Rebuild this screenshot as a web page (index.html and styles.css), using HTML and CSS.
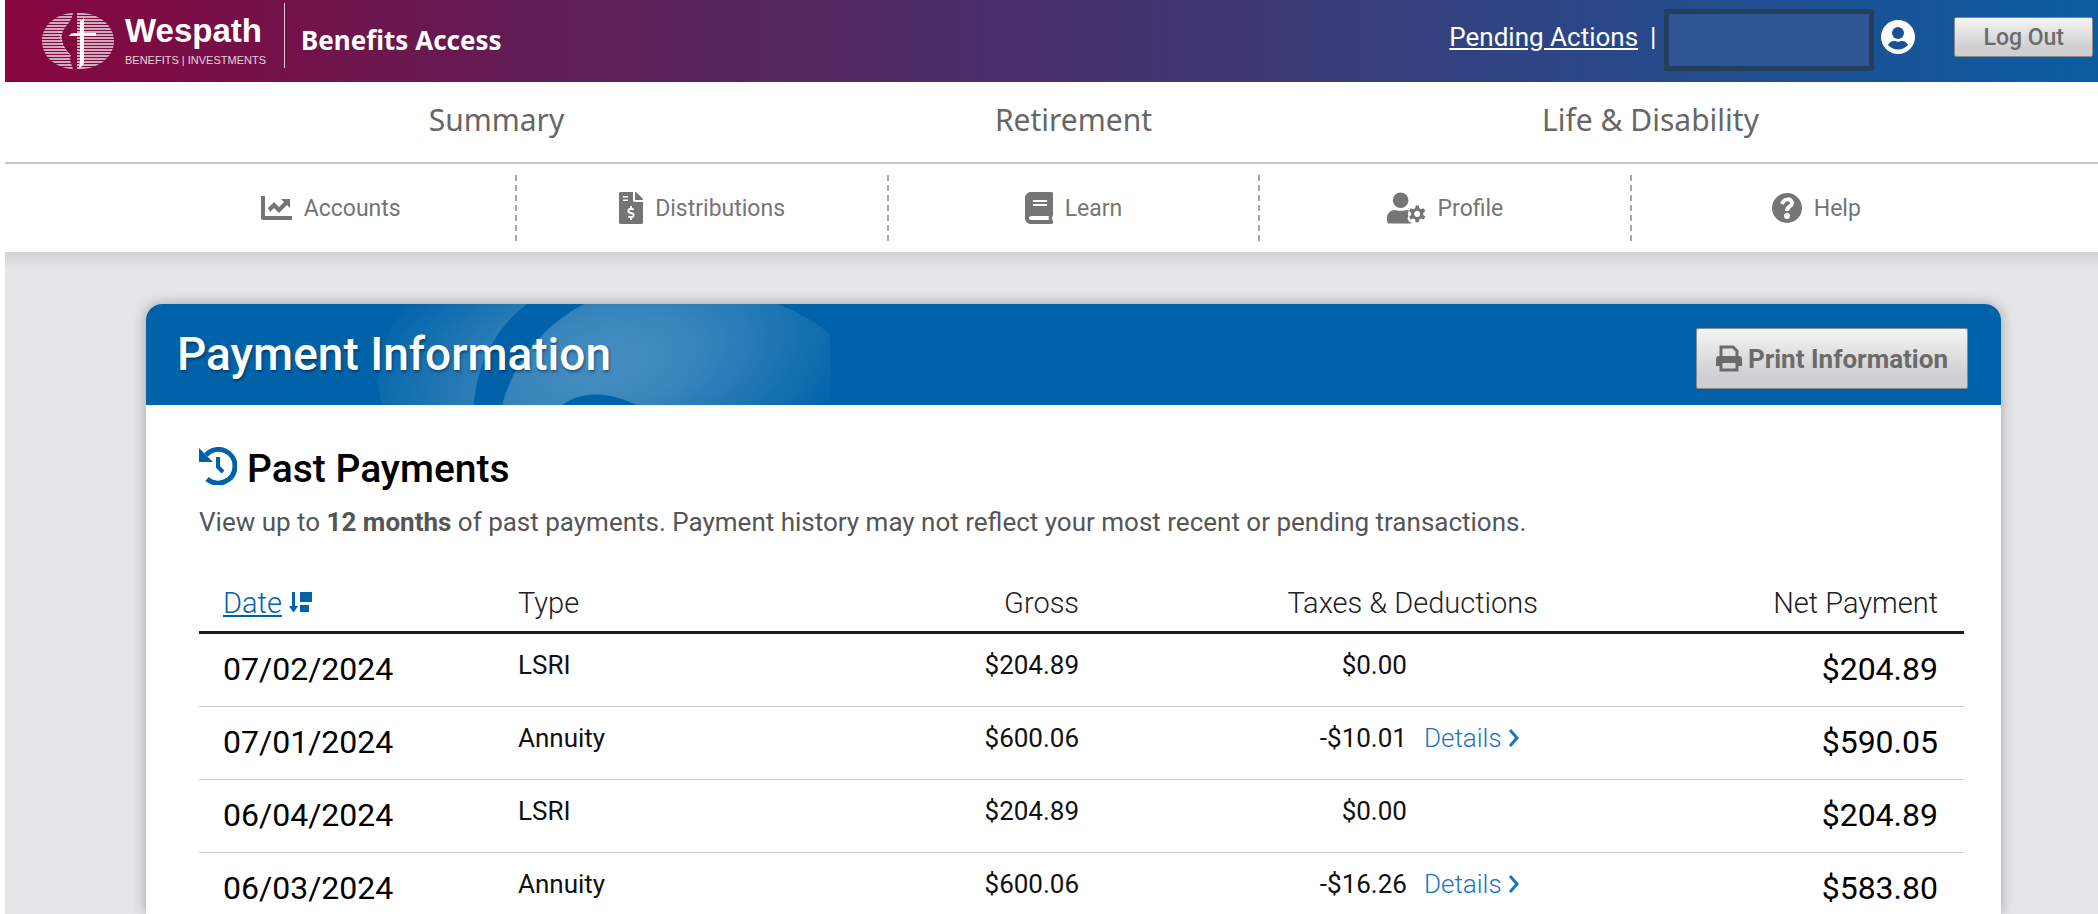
FILE: index.html
```html
<!DOCTYPE html>
<html lang="en">
<head>
  <meta charset="UTF-8">
  <title>Wespath Benefits Access - Payment Information</title>
  <link rel="stylesheet" href="styles.css">
</head>
<body>

  <header class="topbar">
    <a class="logo" href="#">
      <svg class="globe" width="72" height="56" viewBox="0 0 72 56" aria-hidden="true">
        <defs>
          <clipPath id="globe-clip">
            <path d="M31 0C14 1 0 12 0 28s14 27 31 28c-2-6-4-10-2-14-8-7-11-16-8-24 3-6 8-8 10-18z"/>
            <path d="M35 0c20-1 37 11 37 28S55 57 35 56z"/>
          </clipPath>
        </defs>
        <g clip-path="url(#globe-clip)" stroke="#fff" stroke-opacity=".65" stroke-width="2">
          <path d="M0 1h72M0 4h72M0 7h72M0 10h72M0 13h72M0 16h72M0 19h72M0 22h72M0 25h72M0 28h72M0 31h72M0 34h72M0 37h72M0 40h72M0 43h72M0 46h72M0 49h72M0 52h72M0 55h72"/>
        </g>
        <path d="M18 18c0 10 3 18 11 25" fill="none" stroke="#fff" stroke-opacity=".7" stroke-dasharray="2 2"/>
        <path d="M38 8l4-3v15h12v3H42v26c0 3-2 5-5 6l1-8V23H27c1-2 3-3 6-3h5z" fill="#fff"/>
      </svg>
      <span class="logo-text">
        <span class="logo-name">Wespath</span>
        <span class="logo-tag">BENEFITS | INVESTMENTS</span>
      </span>
    </a>
    <span class="app-name">Benefits Access</span>

    <div class="user-tools">
      <a class="pending" href="#">Pending Actions</a>
      <span class="pipe">|</span>
      <span class="user-name"></span>
      <svg class="user-icon" width="34" height="34" viewBox="0 0 34 34" aria-hidden="true">
        <circle cx="17" cy="17" r="17" fill="#fff"/>
        <circle cx="17" cy="13" r="6" fill="#1a5196"/>
        <path d="M7 25c2-4 5-4 7-4 2 1 4 1 6 0 2 0 5 0 7 4-6 6-14 6-20 0z" fill="#1a5196"/>
      </svg>
      <button class="btn btn-logout" type="button">Log Out</button>
    </div>
  </header>

  <nav class="main-nav">
    <a href="#">Summary</a>
    <a href="#">Retirement</a>
    <a href="#">Life &amp; Disability</a>
  </nav>

  <nav class="sub-nav">
    <a href="#">
      <svg width="31" height="24" viewBox="0 0 31 24" aria-hidden="true"><path d="M0 0h4v20h27v4H2q-2 0-2-2z"/><path d="M7 12l6-6 5 5 5-5-3-3h9v9l-3-3-8 8-5-5-4 4z"/></svg>
      Accounts
    </a>
    <a href="#">
      <svg width="24" height="32" viewBox="0 0 384 512" aria-hidden="true"><path d="M377 105 279 7c-4-5-11-7-17-7h-6v128h128v-6c0-6-3-12-7-17zM224 136V0H24C11 0 0 11 0 24v464c0 13 11 24 24 24h336c13 0 24-11 24-24V160H248c-13 0-24-11-24-24zM64 64h80v24H64zm0 56h80v24H64zm144 296v24c0 5-3 8-8 8h-16c-5 0-8-3-8-8v-24c-11 0-22-4-31-11-4-3-4-8-1-12l12-11c3-3 7-3 10-1 4 3 9 4 14 4h28c6 0 11-6 11-13 0-6-3-11-8-12l-45-14c-19-6-32-24-32-44 0-25 19-45 42-46v-24c0-5 3-8 8-8h16c5 0 8 3 8 8v24c11 1 22 5 31 11 4 3 4 8 1 12l-12 11c-3 3-7 3-10 1-4-2-9-4-14-4h-28c-6 0-11 6-11 13 0 6 3 11 8 12l45 14c19 6 32 24 32 44 0 25-19 46-42 46z" fill-rule="evenodd"/></svg>
      Distributions
    </a>
    <a href="#">
      <svg width="28" height="32" viewBox="0 0 448 512" aria-hidden="true"><path d="M448 360V24c0-13-11-24-24-24H96C43 0 0 43 0 96v320c0 53 43 96 96 96h328c13 0 24-11 24-24v-16c0-7-4-14-9-19-4-15-4-59 0-74 6-4 9-11 9-19zM128 134c0-3 3-6 6-6h212c3 0 6 3 6 6v20c0 3-3 6-6 6H134c-3 0-6-3-6-6zm0 64c0-3 3-6 6-6h212c3 0 6 3 6 6v20c0 3-3 6-6 6H134c-3 0-6-3-6-6zm253 250H96c-18 0-32-14-32-32s14-32 32-32h285c-2 17-2 47 0 64z" fill-rule="evenodd"/></svg>
      Learn
    </a>
    <a href="#">
      <svg width="39" height="32" viewBox="0 0 640 512" aria-hidden="true"><circle cx="224" cy="128" r="128"/><path d="M0 422c0-80 60-134 134-134 55 20 125 20 180 0 20 0 36 3 50 9-12 22-24 34-20 56 8 20 4 50-8 72 5 35 35 65 66 78v9H48c-27 0-48-21-48-48z"/><path d="M470 216h52l9 44 30 17 42-15 26 44-34 30v34l34 30-26 44-42-15-30 17-9 44h-52l-9-44-30-17-42 15-26-44 34-30v-34l-34-30 26-44 42 15 30-17zm26 87a50 50 0 1 0 .1 0z" fill-rule="evenodd"/></svg>
      Profile
    </a>
    <a href="#">
      <svg width="30" height="30" viewBox="0 0 30 30" aria-hidden="true"><circle cx="15" cy="15" r="15"/><path d="M10 11c2-6 10-6 10-1 0 4-5 3-5 8" fill="none" stroke="#fff" stroke-width="4"/><circle cx="15" cy="23" r="3" fill="#fff"/></svg>
      Help
    </a>
  </nav>

  <main class="page">
    <section class="card">
      <div class="card-header">
        <svg class="card-art" width="454" height="101" viewBox="0 0 454 101" aria-hidden="true">
          <defs>
            <radialGradient id="art-glow" gradientUnits="userSpaceOnUse" cx="0" cy="0" r="1" gradientTransform="translate(230 60) rotate(-15) scale(275 150)">
              <stop offset="0" stop-color="#fff" stop-opacity=".27"/>
              <stop offset=".3" stop-color="#fff" stop-opacity=".23"/>
              <stop offset="1" stop-color="#fff" stop-opacity="0"/>
            </radialGradient>
          </defs>
          <path d="M32 0h119C121 22 100 60 98 101H6C-3 66 5 30 32 0z" fill="url(#art-glow)"/>
          <path d="M208 0h194q30 12 52 30v71H261C233 88 207 86 186 101h-60C138 60 162 25 208 0z" fill="url(#art-glow)"/>
        </svg>
        <h1>Payment Information</h1>
        <button class="btn btn-print" type="button">
          <svg width="26" height="27" viewBox="0 0 26 27" aria-hidden="true"><path d="M5 12V2h12l4 4v6M5 18v7h16v-7" fill="none" stroke="#6b6b6b" stroke-width="3"/><path d="M3 11h20q3 0 3 3v7h-4v-3H4v3H0v-7q0-3 3-3z" fill="#6b6b6b"/></svg>
          Print Information
        </button>
      </div>

      <div class="card-body">
        <h2>
          <svg width="38" height="38" viewBox="0 0 38 38" aria-hidden="true"><path d="M7 8C19-4 36 5 36 19c0 15-17 22-28 13" fill="none" stroke="#0063a9" stroke-width="5"/><path d="M0 1l14 14H0z" fill="#0063a9"/><path d="M19 10v10l5 5" fill="none" stroke="#0063a9" stroke-width="4"/></svg>
          Past Payments
        </h2>
        <p class="intro">View up to <strong>12 months</strong> of past payments. Payment history may not reflect your most recent or pending transactions.</p>

        <table class="payments">
          <thead>
            <tr>
              <th class="col-date">
                <a href="#">Date</a>
                <svg width="23" height="21" viewBox="0 0 23 21" aria-hidden="true"><path d="M3 0h3v14h3l-4 6h-1l-4-6h3zM11 0h12v10H11zM11 13h9v7h-9z" fill="#0063a9"/></svg>
              </th>
              <th class="col-type">Type</th>
              <th class="col-gross num">Gross</th>
              <th class="col-taxes num">Taxes &amp; Deductions</th>
              <th class="col-net num">Net Payment</th>
            </tr>
          </thead>
          <tbody>
            <tr>
              <td class="big">07/02/2024</td>
              <td>LSRI</td>
              <td class="num">$204.89</td>
              <td>
                <div class="taxes">
                  <span>$0.00</span>
                  <span class="details"></span>
                </div>
              </td>
              <td class="big num">$204.89</td>
            </tr>
            <tr>
              <td class="big">07/01/2024</td>
              <td>Annuity</td>
              <td class="num">$600.06</td>
              <td>
                <div class="taxes">
                  <span>-$10.01</span>
                  <a class="details" href="#">Details <svg width="11" height="18" viewBox="0 0 11 18" aria-hidden="true"><path d="M2 1l7 8-7 8" fill="none" stroke="#1b75bc" stroke-width="3"/></svg></a>
                </div>
              </td>
              <td class="big num">$590.05</td>
            </tr>
            <tr>
              <td class="big">06/04/2024</td>
              <td>LSRI</td>
              <td class="num">$204.89</td>
              <td>
                <div class="taxes">
                  <span>$0.00</span>
                  <span class="details"></span>
                </div>
              </td>
              <td class="big num">$204.89</td>
            </tr>
            <tr>
              <td class="big">06/03/2024</td>
              <td>Annuity</td>
              <td class="num">$600.06</td>
              <td>
                <div class="taxes">
                  <span>-$16.26</span>
                  <a class="details" href="#">Details <svg width="11" height="18" viewBox="0 0 11 18" aria-hidden="true"><path d="M2 1l7 8-7 8" fill="none" stroke="#1b75bc" stroke-width="3"/></svg></a>
                </div>
              </td>
              <td class="big num">$583.80</td>
            </tr>
          </tbody>
        </table>
      </div>
    </section>
  </main>

</body>
</html>
```

FILE: styles.css
```css
* {
  box-sizing: border-box;
}

body {
  margin: 0;
  padding-left: 5px;
  height: 100vh;
  display: flex;
  flex-direction: column;
  overflow: hidden;
  background: #fff;
  font-family: Roboto, sans-serif;
  color: #111;
}

a {
  text-decoration: none;
}

/* top bar */
.topbar {
  flex: none;
  height: 82px;
  display: flex;
  align-items: center;
  padding: 0 5px 0 37px;
  background: linear-gradient(to right, #86063d, #5f1e56 27%, #363f7d 67%, #1d5093 86%, #0a5ca1);
}

.logo {
  display: flex;
  align-items: center;
  gap: 11px;
  color: #fff;
}

.logo-text {
  display: flex;
  flex-direction: column;
  font-family: "Liberation Sans", Arial, sans-serif;
}

.logo-name {
  font-size: 33px;
  font-weight: bold;
  line-height: 38px;
}

.logo-tag {
  font-size: 11px;
  line-height: 20px;
  opacity: 0.8;
}

.app-name {
  height: 65px;
  margin: 0 0 12px 18px;
  padding-left: 16px;
  border-left: 1px solid #e0c8d6;
  font-family: "Noto Sans", sans-serif;
  font-size: 26px;
  font-weight: bold;
  line-height: 74px;
  color: #fff;
}

.user-tools {
  margin-left: auto;
  display: flex;
  align-items: center;
  padding-bottom: 8px;
  font-size: 26px;
  color: #fff;
}

.pending {
  color: #fff;
  text-decoration: underline;
}

.pipe {
  margin: 0 8px 0 12px;
}

.user-name {
  width: 210px;
  height: 62px;
  margin-top: 6px;
  border: 5px solid #22405c;
  background: #2f5597;
}

.user-icon {
  margin: 0 39px 0 7px;
}

.btn {
  display: flex;
  align-items: center;
  justify-content: center;
  border: 1px solid #8a8a8a;
  border-radius: 2px;
  background: linear-gradient(#f4f4f4, #cfcfd1 80%);
  font-family: inherit;
  font-weight: bold;
  color: #6b6b6b;
}

.btn-logout {
  height: 40px;
  padding: 0 28px;
  font-size: 23px;
  font-weight: 500;
}

/* navigation */
.main-nav {
  flex: none;
  display: flex;
  height: 82px;
  padding: 0 159px 4px 203px;
  border-bottom: 2px solid #c6c6c6;
}

.main-nav a {
  flex: 1;
  text-align: center;
  font-family: "Noto Sans", sans-serif;
  font-size: 30px;
  line-height: 76px;
  color: #666;
}

.sub-nav {
  flex: none;
  display: flex;
  align-items: center;
  height: 88px;
  padding: 0 97px 0 141px;
}

.sub-nav a {
  flex: 1;
  height: 66px;
  display: flex;
  align-items: center;
  justify-content: center;
  gap: 12px;
  font-size: 23px;
  color: #757575;
}

.sub-nav a + a {
  border-left: 2px dashed #a8a8a8;
}

.sub-nav svg {
  fill: #757575;
}

/* card */
.page {
  flex: 1;
  display: flex;
  min-height: 0;
  padding: 52px 97px 0 141px;
  background: linear-gradient(#d3d3d4, #e5e6e8 18px);
}

.card {
  flex: 1;
  border-radius: 16px 16px 0 0;
  background: #fff;
  box-shadow: 0 0 14px rgba(0, 0, 0, 0.3);
}

.card-header {
  position: relative;
  display: flex;
  align-items: flex-start;
  justify-content: space-between;
  height: 101px;
  padding: 24px 33px 16px 31px;
  border-radius: 16px 16px 0 0;
  background: #0063a9;
}

.card-art {
  position: absolute;
  left: 230px;
  top: 0;
}

.card-header h1 {
  position: relative;
  margin: 0;
  font-size: 46px;
  font-weight: 500;
  line-height: 53px;
  color: #fff;
  text-shadow: 1px 2px 3px rgba(0, 0, 0, 0.4);
}

.btn-print {
  height: 61px;
  gap: 6px;
  padding: 0 19px;
  font-size: 26px;
}

.card-body {
  padding: 42px 37px 0 53px;
}

h2 {
  display: flex;
  gap: 10px;
  margin: 0 0 14px;
  font-size: 39px;
  font-weight: 500;
  line-height: 44px;
  color: #000;
}

.intro {
  margin: 0 0 46px;
  font-size: 26px;
  line-height: 34px;
  color: #555;
}

.payments {
  width: 100%;
  table-layout: fixed;
  border-collapse: collapse;
}

.payments th {
  padding: 0 26px 10px 24px;
  border-bottom: 3px solid #1c1c1c;
  font-size: 29px;
  font-weight: 300;
  line-height: 36px;
  text-align: left;
  color: #222;
}

.payments th a {
  color: #0063a9;
  text-decoration: underline;
}

.col-date {
  width: 295px;
}

.col-type {
  width: 17%;
}

.col-gross {
  width: 311px;
}

.col-taxes {
  width: 26%;
}

.payments td {
  padding: 12px 26px 14px 24px;
  border-bottom: 1px solid #ccc;
  font-size: 26px;
  line-height: 38px;
  vertical-align: top;
}

.payments .big {
  font-size: 32px;
  line-height: 46px;
  color: #000;
}

.payments .num {
  text-align: right;
}

.taxes {
  display: flex;
  justify-content: flex-end;
}

.details {
  width: 131px;
  padding-left: 17px;
  font-weight: 300;
  color: #1b75bc;
}
```
